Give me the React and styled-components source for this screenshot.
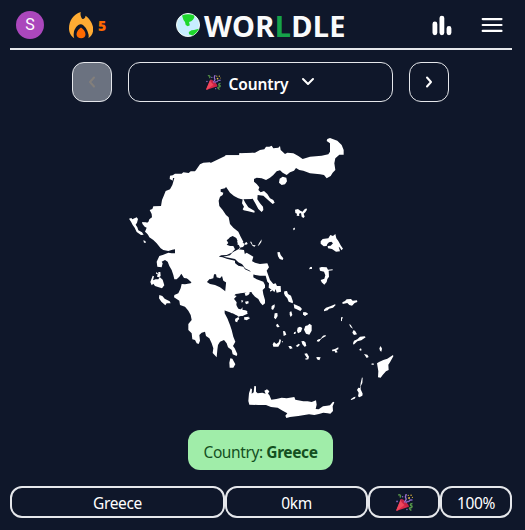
import React from "react";
import styled, { createGlobalStyle } from "styled-components";

const GlobalStyle = createGlobalStyle`
  * { box-sizing: border-box; }
  body {
    margin: 0;
    background: #0f172a;
    color: #fff;
    font-family: "Noto Sans", sans-serif;
    font-size: 15.5px;
    line-height: 24px;
    letter-spacing: -0.35px;
  }
`;

const Page = styled.main`
  width: 502px;
  height: 530px;
  margin-left: 10px;
  display: flex;
  flex-direction: column;
  overflow: hidden;
`;

const Header = styled.header`
  height: 50px;
  flex: none;
  display: grid;
  grid-template-columns: 166px 170px 1fr;
  align-items: center;
  border-bottom: 2px solid #e5e7eb;
`;

const Profile = styled.div`
  display: flex;
  align-items: center;
  padding-left: 6px;
`;

const Avatar = styled.div`
  width: 28px;
  height: 28px;
  border-radius: 50%;
  background: #ab47bc;
  font: 400 16px/28px Roboto, sans-serif;
  letter-spacing: 0;
  text-align: center;
`;

const Streak = styled.div`
  display: flex;
  align-items: center;
  gap: 5px;
  margin-left: 25px;
  color: #ff6a00;
  font-size: 14px;
  font-weight: 900;
  svg { display: block; }
  span { padding-top: 2px; }
`;

const Logo = styled.h1`
  margin: 0;
  display: flex;
  align-items: center;
  gap: 4px;
  font-size: 29px;
  font-weight: 700;
  line-height: 48px;
  color: #f9fafb;
  white-space: nowrap;
  svg { flex: none; }
`;

const Wordmark = styled.span`
  letter-spacing: 0.3px;
  padding-top: 2px;
`;

const Green = styled.span`
  color: #16a34a;
`;

const Actions = styled.div`
  display: flex;
  justify-content: flex-end;
  align-items: center;
  gap: 26px;
  padding-right: 8px;
  svg { display: block; }
`;

const Picker = styled.nav`
  display: flex;
  justify-content: center;
  gap: 16px;
  flex: none;
  height: 40px;
  margin: 12px 1px 0 0;
`;

const Button = styled.button`
  width: ${(p) => (p.$wide ? "265px" : "40px")};
  height: 40px;
  padding: 0;
  display: flex;
  align-items: center;
  justify-content: center;
  gap: 7px;
  border: 1px solid #e5e7eb;
  border-radius: 12px;
  background: ${(p) => (p.disabled ? "#6b7280" : "transparent")};
  color: ${(p) => (p.disabled ? "#837f7b" : "#fff")};
  font: 600 15.5px/24px "Noto Sans", sans-serif;
  letter-spacing: -0.1px;
  svg { display: block; flex: none; }
`;

const ButtonText = styled.span`
  padding-top: 3px;
  margin-right: 5px;
`;

const MapArea = styled.section`
  flex: none;
  height: 300px;
  margin-top: 28px;
  padding-left: 110px;
  svg { display: block; }
`;

const Answer = styled.div`
  align-self: center;
  flex: none;
  width: 145px;
  height: 40px;
  margin-right: 1px;
  padding-top: 2px;
  border-radius: 12px;
  background: #a0eda9;
  color: #14501f;
  line-height: 40px;
  letter-spacing: -0.4px;
  text-align: center;
  white-space: nowrap;
`;

const GuessRow = styled.div`
  flex: none;
  display: grid;
  grid-template-columns: 215px 143px 72px 72px;
  height: 32px;
  margin-top: 16px;
`;

const Cell = styled.div`
  display: flex;
  align-items: center;
  justify-content: center;
  padding-top: ${(p) => (p.$icon ? "0" : "2px")};
  border: 2px solid #e5e7eb;
  border-radius: 12px;
`;

const Popper = ({ size }) => (
  <svg width={size} height={size} viewBox="0 0 16 16">
    <path d="M4.5 5 12 12 1 15.8Q0 16 .3 15Z" fill="#d92848" />
    <path d="M4.5 5 9 9.5 1 15.8Q0 16 .3 15Z" fill="#f0475c" />
    <ellipse cx="8.3" cy="8.6" rx="1.5" ry="5" transform="rotate(-45 8.3 8.6)" fill="#c52345" />
    <g fill="none" strokeWidth="1.3">
      <path d="M2 1c2-.8 3 1 1.5 2.2" stroke="#538e45" />
      <path d="M8.5 8c-1-2 2-2 .8-4s.3-2 .2-4" stroke="#9b71cf" />
      <path d="M9.5 8.5c1-3 2 0 3-2s2 0 3-1.2" stroke="#8062bd" />
      <path d="M15.5 9c-3 0-2 2-1 2s1 2-1 2 0 2 1 2.5" stroke="#55964a" />
    </g>
    <g fill="#e8bd42"><circle cx="12.3" cy="3.8" r=".9" /><circle cx="14.2" cy="1.2" r=".7" /><circle cx="11.5" cy="1.2" r=".6" /><circle cx="15.4" cy="3.2" r=".5" /></g>
    <circle cx="1" cy="7" r=".8" fill="#8b6ac8" />
    <circle cx="6.2" cy="2.6" r=".7" fill="#8b6ac8" />
    <circle cx="10.3" cy="14.6" r=".7" fill="#8b6ac8" />
  </svg>
);

const Flame = () => (
  <svg width="24" height="27" viewBox="0 0 24 27">
    <path fill="#ffac33" d="M11.8 0C11 2.5 12 4.5 12.6 6c.4 1.2 2.2 1.2 3.1-.1.6-.7.8-1.4.7-2.1 3 1.5 6.7 6.7 7.6 11.3.9 5-1.3 9.5-4.8 11.1.8-1 .7-3.5-.3-5.8-1.3-4-4.3-7.8-6.9-8.1-3.2-.4-6.7 4.5-7.2 8.6-.3 2.2 0 4.5.6 5.3C2.2 24.4 0 20.7 0 16.4 0 9.2 4.3 2.1 11.8 0Z" />
    <path fill="#ff6a00" d="M12 15.5c2 1.3 4.5 4 4.5 6.8 0 2.5-1.8 4-4.3 4s-4.7-1.5-4.7-4c0-2.8 2.5-5.5 4.5-6.8Z" />
  </svg>
);

const Globe = () => (
  <svg width="24" height="24" viewBox="0 0 24 24">
    <circle cx="12" cy="12" r="11.5" fill="#c7edff" stroke="#f4fbf6" />
    <path fill="#1ed72c" d="M6 2.4Q12 .3 18.2 2.4L18.3 4.5 17 6.8 15.2 8.3 13 9 13.8 12.2 11.8 13.2 9.7 12 9 9 7.5 7Z" />
    <path fill="#1ed72c" d="M13 21.2 12.8 19 15.5 17.2 18 17 22.8 15.8Q20.8 20.5 16.5 22.5Z" />
  </svg>
);

const Chevron = ({ d, w = 8, h = 12 }) => (
  <svg width={w} height={h} viewBox={`0 0 ${w} ${h}`} fill="none" stroke="currentColor" strokeWidth="2" strokeLinecap="round" strokeLinejoin="round">
    <path d={d} />
  </svg>
);

/* One map pixel is three path units; each group is one region's local grid. */
const Greece = () => (
  <svg width="285" height="300" viewBox="0 0 855 900" fill="#fff">
    <g>
      <path d="M400 68 358 70 358 76 316 76 314 92 304 96 300 101 275 101 270 97 250 98 240 103 228 120 225 124 212 124 206 129 190 127 185 131 165 131 158 136 150 137 149 147 155 150 158 152 159 144 163 144 159 158 157 165 150 178 137 183 131 198 126 210 123 228 100 229 97 237 89 240 95 252 96 262 88 268 85 276 78 280 66 277 68 283 74 290 80 293 75 305 80 310 84 314 88 322 100 330 110 340 122 355 130 360 145 363 157 359 165 358 165 374 160 378 140 390 240 480 310 400 295 380 304 376 320 375 335 368 345 358 340 348 330 348 320 344 325 339 320 331 325 327 330 322 338 318 349 324 353 334 353 345 364 343 370 335 362 320 355 305 340 293 330 282 326 262 318 255 308 240 298 228 296 212 300 200 308 195 310 188 302 185 302 178 315 175 322 166 330 160 333 170 326 178 335 188 350 200 365 208 395 207Z" />
      <path d="M27 266 34 264 37 268 50 262 54 267 51 278 47 284 52 292 55 301 66 307 71 314 63 315 50 306 44 293 38 285 33 275ZM70 331 76 333 78 338 72 338ZM66 277 80 277 80 284 70 283Z" />
      <path d="M374 339 380 336 383 342 377 344Z" />
    </g>
    <g transform="translate(330)">
      <path d="M-10 76 28 76 29 69 35 72 50 70 75 68 90 60 103 58 108 50 118 50 125 47 130 55 145 53 150 48 152 60 165 72 172 68 190 70 205 78 218 87 240 80 275 77 295 73 300 65 300 40 290 33 292 27 300 24 322 32 335 45 341 60 341 74 328 74 316 85 313 100 316 120 308 128 302 138 290 145 282 135 270 133 240 130 220 122 208 120 198 114 192 122 180 127 170 135 158 128 150 121 140 124 130 135 120 143 108 150 95 145 80 143 72 147 72 155 80 162 88 172 85 180 92 187 102 183 112 192 120 205 130 210 134 218 128 222 115 211 100 197 83 195 82 208 90 220 99 230 100 240 95 246 85 237 75 218 68 206 55 207 40 206 45 217 55 232 74 243 73 248 55 244 41 241 38 238 42 230 36 220 38 208 25 205 12 198 0 188 -60 100Z" />
      <path d="M149 146 158 140 169 143 171 154 165 163 155 165 147 158ZM195 239 204 237 211 242 218 245 222 239 229 235 231 239 226 247 221 251 224 260 220 264 215 260 213 249 207 251 208 258 200 257 201 251 196 249ZM190 294 195 293 194 299 190 301ZM272 334 278 327 295 325 301 315 309 318 316 312 319 325 325 333 332 346 339 356 334 361 330 353 326 350 330 364 318 365 306 357 294 355 293 348 302 347 309 340 304 335 297 337 292 342 290 348 281 349 272 341ZM142 367 149 366 152 375 160 385 158 390 149 387 144 379ZM60 335 64 335 68 345 77 346 74 350 68 348ZM83 348 88 338 95 328 94 336 87 346ZM44 340 50 338 50 343 44 344Z" />
    </g>
    <g transform="translate(0 330)">
      <path d="M165 40 155 40 145 38 130 44 118 48 110 65 112 80 125 82 128 70 125 65 135 60 143 65 148 78 155 90 160 105 163 118 170 118 178 110 184 101 192 114 210 116 222 112 232 106 245 105 258 112 270 118 280 115 282 103 288 103 290 112 300 115 306 108 310 122 320 128 328 126 332 133 345 130 356 135 350 143 340 141 336 148 323 146 330 153 325 159 315 153 300 142 285 135 270 132 255 122 245 115 235 112 225 115 212 130 195 133 185 132 182 145 175 160 163 165 162 172 178 182 180 195 195 200 205 212 212 225 215 240 205 252 205 270 215 280 217 298 225 300 230 310 236 312 240 302 238 285 245 278 255 275 258 288 268 295 275 310 280 325 278 339 290 352 292 330 294 315 300 305 312 300 320 310 324 322 328 325 335 330 338 343 350 348 352 342 344 325 339 318 346 305 340 290 335 270 330 255 322 235 314 220 314 206 322 208 335 220 345 218 355 230 372 225 383 214 366 209 355 206 347 192 341 178 350 168 335 163 400 155 400 99 375 88 370 80 355 77 345 70 345 62 335 60 320 56 308 52 298 50 295 44 230 20Z" />
      <path d="M341 47 345 37 356 30 358 23 369 21 374 14 370 8 351 3 361 25 350 33 338 37 330 46 310 50 330 54 345 57 355 67 373 76 390 85 400 50 380 38 370 45 356 45Z" />
      <path d="M115 96 121 96 122 108 117 112 111 110 113 103 108 101 109 96 115 102ZM98 107 102 109 99 121 107 118 115 118 119 111 128 119 133 136 126 145 114 141 105 138 100 131 95 136 91 126ZM118 165 127 168 134 176 149 184 152 190 140 190 136 196 124 185 117 175ZM331 355 337 356 342 365 346 373 340 383 329 383 328 368ZM345 240 353 237 352 247 347 245ZM372 232 387 230 382 237 373 238Z" />
    </g>
    <g transform="translate(330 330)">
      <path d="M3 49 12 43 10 36 25 28 42 30 45 45 60 60 75 68 90 72 112 70 117 82 110 92 120 120 130 132 137 130 141 138 152 138 153 155 140 158 137 147 133 157 128 151 121 155 120 150 125 149 116 143 117 130 112 125 107 107 90 107 65 103 60 92 45 85 35 70 20 58ZM-5 60 8 62 20 75 40 88 55 95 60 107 75 115 80 118 100 125 105 135 105 143 98 150 100 163 105 180 105 190 98 196 91 188 85 177 75 170 67 161 61 150 50 151 40 153 31 159 18 161 8 171 13 178 20 187 18 202 30 211 38 202 37 209 50 212 53 221 37 228 19 226 8 220 -20 210Z" />
      <path d="M44 160 53 154 60 158 55 165 47 168ZM45 185 55 183 56 190 48 193ZM34 180 40 182 37 187 35 188ZM41 238 57 232 60 235 50 241ZM15 237 25 231 28 237 18 246ZM163 154 171 153 174 162 183 167 189 185 188 190 176 185 172 175 165 167 162 160ZM191 192 200 196 210 200 216 207 211 213 200 208 193 205ZM125 198 134 193 134 201 129 210 124 207ZM134 220 142 219 143 228 137 238 132 233ZM179 216 184 214 187 225 182 231 179 224ZM220 216 234 220 226 227 219 224ZM138 255 143 251 149 261 141 262ZM159 273 165 274 169 284 161 288ZM203 263 210 260 217 264 213 275 204 280 201 272ZM226 258 234 256 238 251 245 256 245 272 238 284 228 281 222 269ZM193 276 198 275 196 282 191 282ZM197 318 206 311 210 314 203 321ZM214 304 221 303 228 315 225 320 218 314ZM175 318 183 318 188 325 180 327ZM128 313 132 306 139 312 146 307 149 297 153 300 151 310 145 320 130 320ZM155 304 159 304 158 308ZM223 341 231 340 237 350 235 358 227 359 226 355 232 355 227 348ZM259 351 272 352 268 361 261 358ZM263 299 271 298 269 304 260 304ZM240 83 246 80 246 86 237 88Z" />
    </g>
    <g transform="translate(540 210)">
      <path d="M28 204 33 200 36 206 31 207ZM58 203 65 201 80 202 84 209 98 208 98 211 86 212 87 230 82 237 80 246 73 254 65 247 62 240 73 236 76 226 72 215 60 212ZM127 307 135 303 140 298 153 297 158 302 171 301 172 306 164 309 156 317 148 315 142 309 128 312ZM72 329 78 323 91 319 105 313 107 315 99 323 87 326 83 331 72 334ZM123 352 129 352 126 358 126 364 123 362ZM147 373 152 374 159 386 152 382ZM160 391 165 392 171 403 162 405 157 398ZM51 421 62 416 69 407 77 405 77 409 66 415 54 426ZM96 449 105 447 115 442 115 448 109 450 113 457 106 458 104 453 97 454ZM159 430 162 422 172 418 180 410 194 409 197 412 184 421 172 424 161 434ZM178 448 183 445 185 451 180 452ZM192 462 202 464 206 471 200 474ZM214 491 220 490 222 494 215 494ZM238 445 242 438 246 446 244 455 240 452ZM231 490 237 486 250 480 262 476 279 465 280 469 270 487 265 494 266 510 258 514 248 525 242 533 234 532 235 514ZM182 549 186 532 188 534 187 549 182 559 182 568 188 581 187 587 178 592 174 589 176 578 171 570 175 563 180 564ZM152 598 162 591 167 590 164 596 154 600ZM10 338 18 337 24 343 14 347 10 343ZM10 423 16 426 19 437 14 440 6 428ZM51 474 57 471 59 478 53 478Z" />
    </g>
    <path transform="translate(345 735)" d="M40 78 42 55 47 40 51 43 50 56 56 52 58 33 63 34 63 50 68 55 82 53 92 56 88 47 96 43 103 49 99 56 103 60 109 74 124 72 140 68 155 70 178 66 181 74 205 79 218 79 230 81 243 76 245 89 242 102 251 103 264 94 276 92 285 91 294 80 298 82 293 94 294 108 286 116 278 115 265 113 252 117 238 120 222 118 190 123 165 126 154 129 151 122 157 115 143 107 128 98 108 96 93 90 70 90 43 89Z" />
  </svg>
);

export default function App() {
  return (
    <>
      <GlobalStyle />
      <Page>
        <Header>
          <Profile>
            <Avatar>S</Avatar>
            <Streak><Flame /><span>5</span></Streak>
          </Profile>
          <Logo><Globe /><Wordmark>WOR<Green>L</Green>DLE</Wordmark></Logo>
          <Actions>
            <svg width="26" height="24" viewBox="0 0 26 24" stroke="#fff" strokeWidth="4.8" strokeLinecap="round">
              <path d="M6.9 11v8.8M13.9 5.1v14.7M21 15.5v4.3" />
            </svg>
            <svg width="24" height="24" viewBox="0 0 24 24" stroke="#fff" strokeWidth="2.2" strokeLinecap="round">
              <path d="M2.7 6.1h18.8M2.7 12h18.8M2.7 17.9h18.8" />
            </svg>
          </Actions>
        </Header>
        <Picker>
          <Button disabled aria-label="Previous"><Chevron d="M6 1.5 2 6l4 4.5" /></Button>
          <Button $wide>
            <Popper size={15} />
            <ButtonText>Country</ButtonText>
            <Chevron w={14} h={10} d="M2 2l5 5 5-5" />
          </Button>
          <Button aria-label="Next"><Chevron d="M2 1.5 6 6l-4 4.5" /></Button>
        </Picker>
        <MapArea><Greece /></MapArea>
        <Answer>Country: <b>Greece</b></Answer>
        <GuessRow>
          <Cell>Greece</Cell>
          <Cell>0km</Cell>
          <Cell $icon><Popper size={17} /></Cell>
          <Cell>100%</Cell>
        </GuessRow>
      </Page>
    </>
  );
}
